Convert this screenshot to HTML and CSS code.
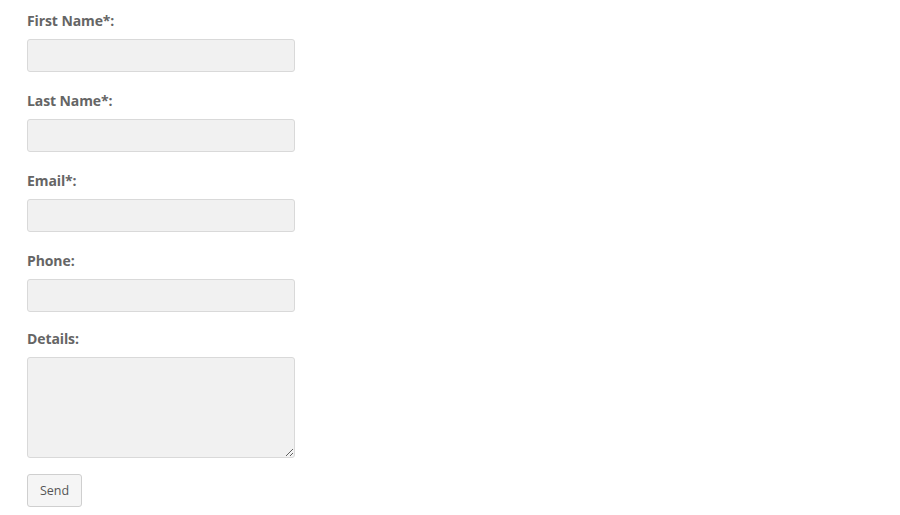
FILE: index.html
```html
<!DOCTYPE html>
<html>
<head>
<meta charset="utf-8">
<link rel="stylesheet" href="styles.css">
</head>
<body>
<form class="contact-form">
  <div class="field">
    <label class="field-label">First Name*:</label>
    <input class="field-input" type="text">
  </div>
  <div class="field">
    <label class="field-label">Last Name*:</label>
    <input class="field-input" type="text">
  </div>
  <div class="field">
    <label class="field-label">Email*:</label>
    <input class="field-input" type="text">
  </div>
  <div class="field field-phone">
    <label class="field-label">Phone:</label>
    <input class="field-input" type="text">
  </div>
  <div class="field field-details">
    <label class="field-label">Details:</label>
    <textarea class="field-input field-textarea"></textarea>
  </div>
  <button class="send-btn" type="button">Send</button>
</form>
</body>
</html>
```

FILE: styles.css
```css
html, body {
  margin: 0;
  padding: 0;
  background: #ffffff;
}
body {
  font-family: "Open Sans", "Lato", sans-serif;
}
.contact-form {
  display: flex;
  flex-direction: column;
  align-items: flex-start;
  padding: 11px 0 0 27px;
}
.field {
  display: flex;
  flex-direction: column;
  margin-bottom: 19px;
}
.field-phone {
  margin-bottom: 17px;
}
.field-details {
  margin-bottom: 16px;
}
.field-label {
  font-size: 14px;
  font-weight: 700;
  line-height: 20px;
  color: #656565;
  margin-bottom: 8px;
  letter-spacing: -0.1px;
}
.field-input {
  box-sizing: border-box;
  width: 268px;
  height: 33px;
  margin: 0;
  background: #f1f1f1;
  border: 1px solid #d9d9d9;
  border-radius: 3px;
  outline: none;
  font-family: inherit;
}
.field-textarea {
  height: 101px;
  resize: vertical;
}
.send-btn {
  box-sizing: border-box;
  width: 55px;
  height: 33px;
  background: #f5f5f5;
  border: 1px solid #cfcfcf;
  border-radius: 3px;
  font-family: "Open Sans", "Lato", sans-serif;
  font-size: 12.5px;
  color: #555555;
  padding: 0;
}
```
